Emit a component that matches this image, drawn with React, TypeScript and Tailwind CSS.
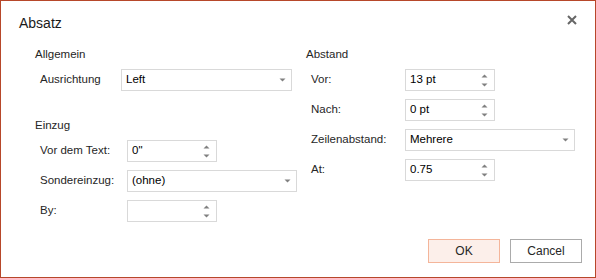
import React from "react";

const font = { fontFamily: '"Liberation Sans", Arial, sans-serif' };

function ArrowDown() {
  return (
    <svg width="7" height="4" viewBox="0 0 7 4" className="shrink-0 fill-[#808080]">
      <path d="M0.5 0.5 H6.5 L3.5 3.5 Z" />
    </svg>
  );
}

function ArrowUp() {
  return (
    <svg width="7" height="4" viewBox="0 0 7 4" className="shrink-0 fill-[#808080]">
      <path d="M0.5 3.5 H6.5 L3.5 0.5 Z" />
    </svg>
  );
}

function Spinner({ value }: { value?: string }) {
  return (
    <div className="flex h-[22px] w-[90px] shrink-0 items-center border border-[#d9d9d9] bg-white pl-[4px] pr-[6px]">
      <span className="flex-1 text-[11.5px] text-black">{value}</span>
      <div className="flex flex-col gap-[5px]">
        <ArrowUp />
        <ArrowDown />
      </div>
    </div>
  );
}

function Select({ value, width }: { value: string; width: string }) {
  return (
    <div className={`flex h-[22px] shrink-0 items-center border border-[#d9d9d9] bg-white pl-[4px] pr-[5px] ${width}`}>
      <span className="flex-1 text-[11.5px] text-black">{value}</span>
      <ArrowDown />
    </div>
  );
}

function Row({ label, labelWidth, children }: { label: string; labelWidth: string; children: React.ReactNode }) {
  return (
    <div className="flex items-center pl-[5px]">
      <span className={`shrink-0 whitespace-nowrap text-[11.5px] text-[#262626] ${labelWidth}`}>{label}</span>
      {children}
    </div>
  );
}

export default function App() {
  return (
    <div className="flex h-[278px] w-[596px] flex-col border border-[#b7472a] bg-white" style={font}>
      <div className="flex h-[40px] items-start justify-between pl-[18px] pr-[18px]">
        <span className="mt-[13px] text-[14px] leading-[18px] text-[#1a1a1a]">Absatz</span>
        <svg width="10" height="10" viewBox="0 0 10 10" className="mt-[14px] stroke-[#666]" strokeWidth="2">
          <path d="M1 1 L9 9 M9 1 L1 9" />
        </svg>
      </div>

      <div className="flex pt-[5px]">
        <div className="w-[271px] shrink-0 pl-[34px]">
          <div className="text-[11.5px] leading-[16px] text-[#262626]">Allgemein</div>
          <div className="mt-[7px]">
            <Row label="Ausrichtung" labelWidth="w-[81px]">
              <Select value="Left" width="w-[171px]" />
            </Row>
          </div>
          <div className="mt-[26px] text-[11.5px] leading-[16px] text-[#262626]">Einzug</div>
          <div className="mt-[7px] flex flex-col gap-[8px]">
            <Row label="Vor dem Text:" labelWidth="w-[87px]">
              <Spinner value={'0"'} />
            </Row>
            <Row label="Sondereinzug:" labelWidth="w-[87px]">
              <Select value="(ohne)" width="w-[170px]" />
            </Row>
            <Row label="By:" labelWidth="w-[87px]">
              <Spinner />
            </Row>
          </div>
        </div>

        <div className="pl-[34px]">
          <div className="text-[11.5px] leading-[16px] text-[#262626]">Abstand</div>
          <div className="mt-[7px] flex flex-col gap-[8px]">
            <Row label="Vor:" labelWidth="w-[94px]">
              <Spinner value="13 pt" />
            </Row>
            <Row label="Nach:" labelWidth="w-[94px]">
              <Spinner value="0 pt" />
            </Row>
            <Row label="Zeilenabstand:" labelWidth="w-[94px]">
              <Select value="Mehrere" width="w-[170px]" />
            </Row>
            <Row label="At:" labelWidth="w-[94px]">
              <Spinner value="0.75" />
            </Row>
          </div>
        </div>
      </div>

      <div className="mt-auto flex justify-end gap-[10px] pb-[14px] pr-[13px]">
        <button className="h-[24px] w-[72px] border border-[#f4b59a] bg-[#fcefea] text-[12px] text-[#262626]">OK</button>
        <button className="h-[24px] w-[72px] border border-[#ababab] bg-white text-[12px] text-[#262626]">Cancel</button>
      </div>
    </div>
  );
}
